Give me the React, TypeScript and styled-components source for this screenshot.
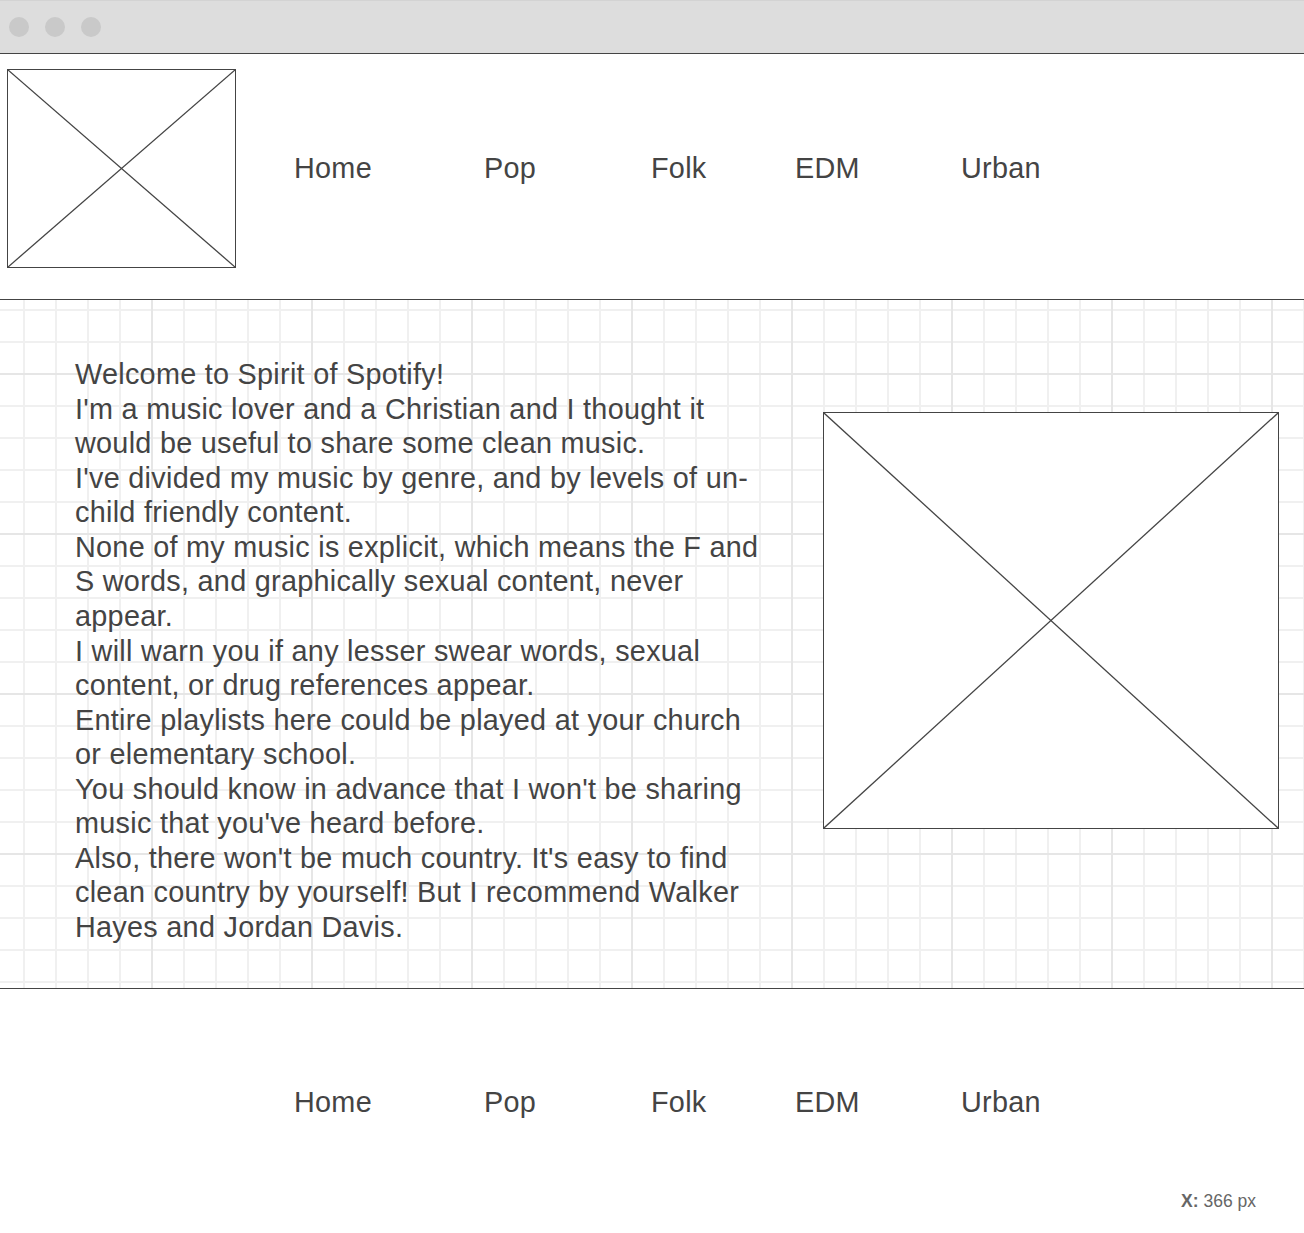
import React from "react";
import styled, { createGlobalStyle } from "styled-components";

const Global = createGlobalStyle`
  html, body { margin: 0; padding: 0; background: #ffffff; }
  body { font-family: "Liberation Sans", Arial, sans-serif; color: #444444; }
`;

const Page = styled.div`
  width: 1304px;
  height: 1233px;
  display: flex;
  flex-direction: column;
  overflow: hidden;
  background: #ffffff;
`;

const TitleBar = styled.div`
  flex: none;
  box-sizing: border-box;
  background: #dddddd;
  border-top: 1px solid #d3d3d3;
  border-bottom: 1px solid #444444;
  display: flex;
  align-items: center;
  gap: 16px;
  padding: 0 0 1px 9px;
  height: 54px;
`;

const Dot = styled.span`
  width: 20px;
  height: 20px;
  border-radius: 50%;
  background: #c9c9c9;
`;

const Header = styled.header`
  flex: none;
  border-bottom: 1px solid #444444;
  display: flex;
  align-items: flex-start;
  padding: 15px 0 0 7px;
  box-sizing: border-box;
  height: 246px;
`;

const Row = styled.div`
  display: flex;
  align-items: center;
`;

const Placeholder = styled.div<{ $w: number; $h: number }>`
  width: ${(p) => p.$w}px;
  height: ${(p) => p.$h}px;
  border: 1px solid #444444;
  box-sizing: border-box;
  background: #ffffff;
  flex: none;
  svg {
    display: block;
    width: 100%;
    height: 100%;
  }
`;

const Nav = styled.nav<{ $offset: number }>`
  display: grid;
  grid-template-columns: 190px 167px 144px 166px auto;
  margin-left: ${(p) => p.$offset}px;
`;

const NavItem = styled.a`
  font-size: 28.8px;
  line-height: 34.56px;
  letter-spacing: 0.28px;
  color: #444444;
  text-decoration: none;
  white-space: nowrap;
`;

const Main = styled.main`
  height: 688px;
  flex: none;
  border-bottom: 1px solid #444444;
  display: flex;
  align-items: flex-start;
  padding-left: 75px;
  padding-right: 25px;
  background-color: #ffffff;
  background-image:
    linear-gradient(to right, #e6e6e6 2px, transparent 2px),
    linear-gradient(to bottom, #e6e6e6 2px, transparent 2px),
    linear-gradient(to right, #f0f0f0 2px, transparent 2px),
    linear-gradient(to bottom, #f0f0f0 2px, transparent 2px);
  background-size: 160px 160px, 160px 160px, 32px 32px, 32px 32px;
  background-position: 151px 73px, 151px 73px, 23px 9px, 23px 9px;
`;

const Intro = styled.div`
  width: 690px;
  padding-top: 57px;
  font-size: 28.8px;
  line-height: 34.56px;
  letter-spacing: 0.28px;
  color: #444444;
  p {
    margin: 0;
  }
`;

const SideImage = styled(Placeholder)`
  margin-top: 112px;
  margin-left: auto;
`;

const Footer = styled.footer`
  flex: 1;
  display: flex;
  flex-direction: column;
  padding-top: 96px;
`;

const Coord = styled.div`
  align-self: flex-end;
  margin-top: 71px;
  margin-right: 48px;
  font-size: 17.5px;
  color: #666666;
  b {
    font-weight: bold;
  }
`;

const Cross = () => (
  <svg viewBox="0 0 100 100" preserveAspectRatio="none">
    <line x1="0" y1="0" x2="100" y2="100" stroke="#444444" strokeWidth="1.3" vectorEffect="non-scaling-stroke" />
    <line x1="100" y1="0" x2="0" y2="100" stroke="#444444" strokeWidth="1.3" vectorEffect="non-scaling-stroke" />
  </svg>
);

const links = ["Home", "Pop", "Folk", "EDM", "Urban"];

const NavLinks = ({ offset }: { offset: number }) => (
  <Nav $offset={offset}>
    {links.map((l) => (
      <NavItem key={l}>{l}</NavItem>
    ))}
  </Nav>
);

const paragraphs = [
  "Welcome to Spirit of Spotify!",
  "I'm a music lover and a Christian and I thought it would be useful to share some clean music.",
  "I've divided my music by genre, and by levels of un-child friendly content.",
  "None of my music is explicit, which means the F and S words, and graphically sexual content, never appear.",
  "I will warn you if any lesser swear words, sexual content, or drug references appear.",
  "Entire playlists here could be played at your church or elementary school.",
  "You should know in advance that I won't be sharing music that you've heard before.",
  "Also, there won't be much country. It's easy to find clean country by yourself! But I recommend Walker Hayes and Jordan Davis.",
];

export default function App() {
  return (
    <>
      <Global />
      <Page>
        <TitleBar>
          <Dot />
          <Dot />
          <Dot />
        </TitleBar>
        <Header>
          <Row>
            <Placeholder $w={229} $h={199}>
              <Cross />
            </Placeholder>
            <NavLinks offset={58} />
          </Row>
        </Header>
        <Main>
          <Intro>
            {paragraphs.map((p, i) => (
              <p key={i}>{p}</p>
            ))}
          </Intro>
          <SideImage $w={456} $h={417}>
            <Cross />
          </SideImage>
        </Main>
        <Footer>
          <NavLinks offset={294} />
          <Coord>
            <b>X:</b> 366 px
          </Coord>
        </Footer>
      </Page>
    </>
  );
}
